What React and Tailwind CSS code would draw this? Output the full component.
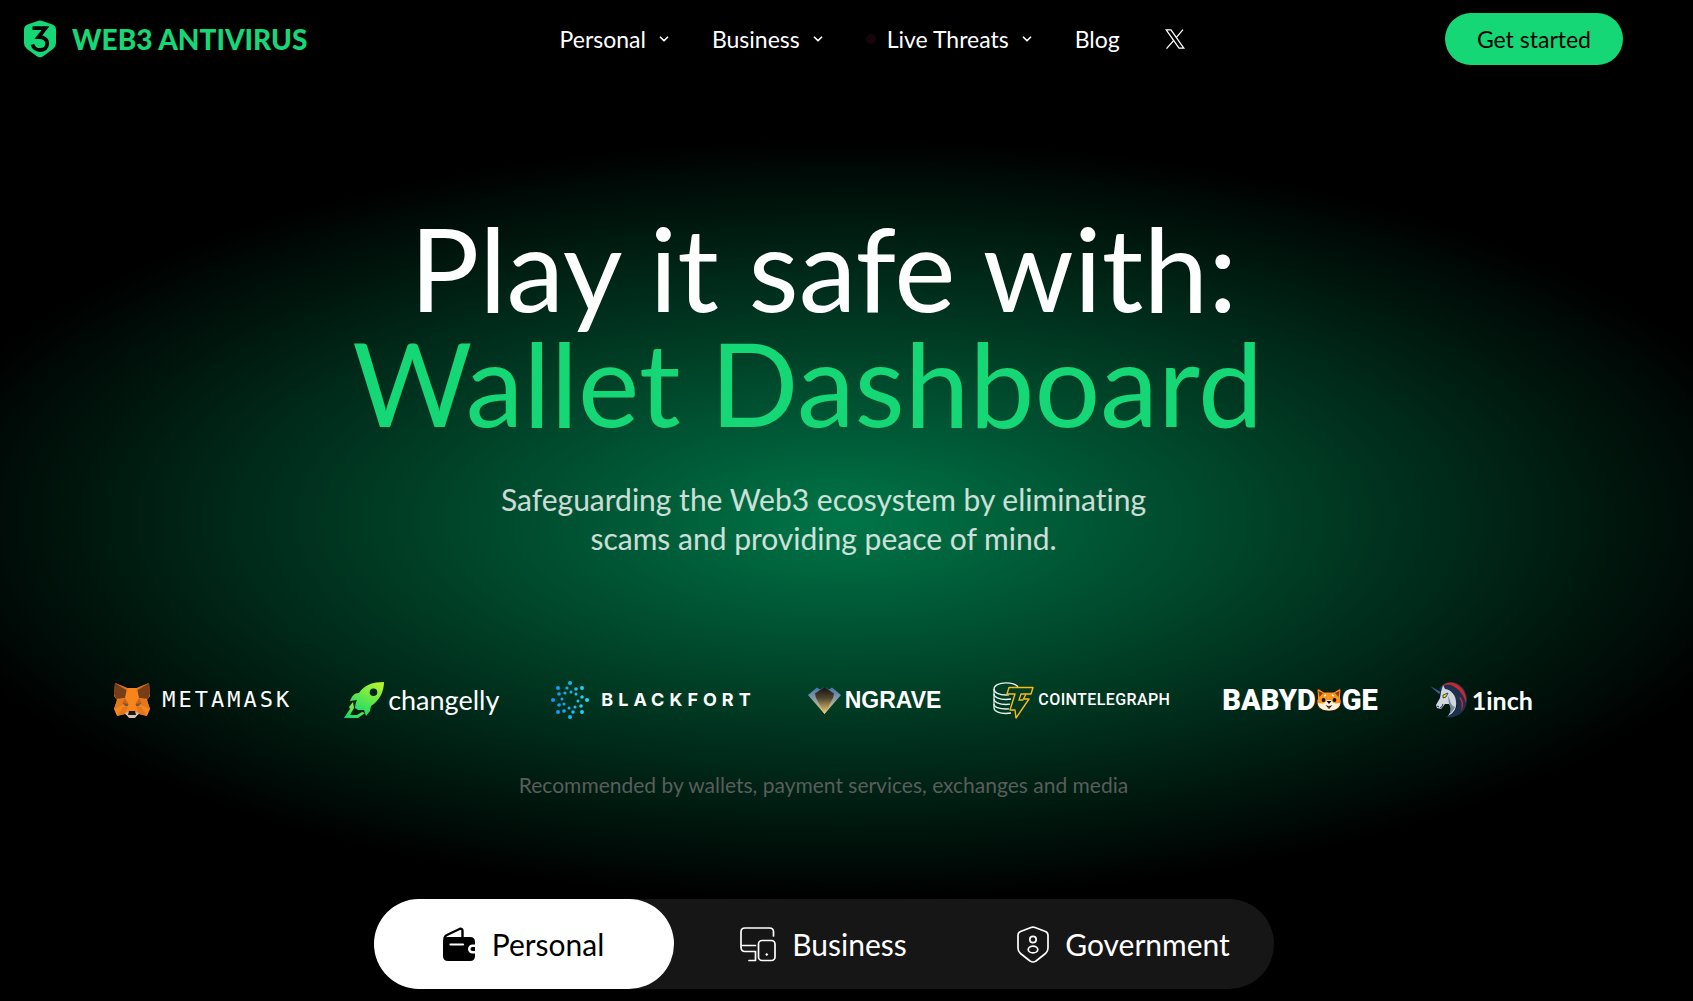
import { useState } from "react";
import { ChevronDown } from "lucide-react";

const ShieldLogo = () => (
  <svg width="32" height="38" viewBox="0 0 32 38" aria-hidden="true">
    <path
      d="M13 1.2Q16 0 19 1.2L28.500 4.500Q32 6 32 9.500V23Q32 26.500 29.500 28.500L19.500 36Q16 38.500 12.500 36L2.500 28.500Q0 26.500 0 23V9.500Q0 6 3.500 4.500Z"
      fill="#16d775"
    />
    <path
      d="M8.500 8.200H21.500L14.500 17C20 16.800 23.200 19.600 23.200 23.600C23.200 28 20 30 16 30C12 30 9.600 28 8.400 24.500"
      fill="none"
      stroke="#000"
      strokeWidth="3.800"
    />
  </svg>
);

const XIcon = () => (
  <svg width="20" height="20" viewBox="0 0 20 20" fill="none" stroke="#fff" strokeWidth="1.300" aria-hidden="true">
    <path d="M1.200 0.800H6L18.800 19.200H14Z" />
    <path d="M18 0.600L11.200 8.600M8.800 11.400L1.500 19.600" />
  </svg>
);

const FoxIcon = () => (
  <svg width="36" height="35" viewBox="0 0 36 35" aria-hidden="true">
    <path d="M1 0L13 5H23L35 0L36 13L33 17L36 26L33 33L25 31L21 34H15L11 31L3 33L0 26L3 17L0 13Z" fill="#f6851b" />
    <path d="M1 0L13 5L11 15L2 16L0 11Z" fill="#763d16" />
    <path d="M35 0L23 5L25 15L34 16L36 11Z" fill="#763d16" />
    <path d="M1 0L14 8L13 5ZM35 0L22 8L23 5Z" fill="#e2761b" />
    <path d="M3 17L11 15L9 22L0 26ZM33 17L25 15L27 22L36 26Z" fill="#e4761b" />
    <path d="M11 15L15 22L8 21ZM25 15L21 22L28 21Z" fill="#cd6116" />
    <path d="M9 20L14 21L14 23L11 23ZM27 20L22 21L22 23L25 23Z" fill="#6b5a4c" />
    <path d="M14 23L11 31L3 33L9 24ZM22 23L25 31L33 33L27 24Z" fill="#e4751f" />
    <path d="M11 30L15 29H21L25 30L21 35H15Z" fill="#d7c1b3" />
    <path d="M15 28H21L22 32H14Z" fill="#161616" />
  </svg>
);

const RocketIcon = () => (
  <svg width="40" height="36" viewBox="0 0 40 36" aria-hidden="true">
    <defs>
      <linearGradient id="rocket" x1="0.800" y1="0" x2="0.300" y2="1">
        <stop offset="0" stopColor="#b4f52a" />
        <stop offset="1" stopColor="#14d96b" />
      </linearGradient>
    </defs>
    <path
      fill="url(#rocket)"
      fillRule="evenodd"
      d="M40 0C29 0 20 3 15 11C10 11 8 14 6 19L13 18C12 20 11 23 11 26L14 28L20 28L22 34L26 29L27 24C35 19 40 10 40 0ZM29.500 6.500A3.800 3.800 0 1 0 29.500 14.100A3.800 3.800 0 1 0 29.500 6.500Z"
    />
    <path fill="url(#rocket)" d="M9 20L5 25L6 27L0 36H14L21 31L18 30L13 33H6L10 26Z" />
  </svg>
);

// [x, y, radius]
const blackfortDots = [
  [19, 2, 2], [19, 36, 2], [2, 19, 2], [36, 19, 2],
  [7, 7, 2], [31, 7, 2], [7, 31, 2], [31, 31, 2],
  [16, 7, 1.6], [25, 8, 1.8], [8, 13, 1.8], [14, 12, 1.6],
  [20, 11, 1.5], [25, 13, 1.5], [31, 16, 1.8], [11, 18, 1.5],
  [27, 20, 1.5], [8, 24, 1.8], [13, 23, 1.5], [30, 25, 1.8],
  [18, 27, 1.5], [24, 26, 1.5], [13, 30, 1.8], [22, 31, 1.8],
];

const BlackfortIcon = () => (
  <svg width="38" height="38" viewBox="0 0 38 38" aria-hidden="true">
    <defs>
      <linearGradient id="dots" gradientUnits="userSpaceOnUse" x1="0" y1="0" x2="38" y2="0">
        <stop offset="0" stopColor="#0a90ff" />
        <stop offset="1" stopColor="#22dcf0" />
      </linearGradient>
    </defs>
    {blackfortDots.map(([x, y, r]) => (
      <circle key={`${x}-${y}`} cx={x} cy={y} r={r} fill="url(#dots)" />
    ))}
  </svg>
);

const NgraveIcon = () => (
  <svg width="33" height="27" viewBox="0 0 33 27" aria-hidden="true">
    <defs>
      <linearGradient id="gemOuter" x1="0" y1="0" x2="0" y2="1">
        <stop offset="0" stopColor="#3e74b4" />
        <stop offset="0.500" stopColor="#93a0a0" />
        <stop offset="1" stopColor="#f0cc70" />
      </linearGradient>
      <linearGradient id="gemInner" x1="0" y1="0" x2="0" y2="1">
        <stop offset="0" stopColor="#14120f" />
        <stop offset="0.400" stopColor="#4d422d" />
        <stop offset="1" stopColor="#f7d47c" />
      </linearGradient>
    </defs>
    <path d="M0 8L9 0.500L12 2.500L16.500 0L21 2.500L24 0.500L33 8L16.500 27Z" fill="url(#gemOuter)" />
    <path d="M16.500 0L26 6.500L25 11L16.500 27L8 11L7 6.500Z" fill="url(#gemInner)" />
  </svg>
);

const CointelegraphIcon = () => (
  <svg width="41" height="37" viewBox="0 0 41 37" fill="none" strokeWidth="1.300" aria-hidden="true">
    <g stroke="#e8f2ec">
      <path d="M25 5C23 2 18 0.800 13 0.800C6 0.800 1 3.500 1 7C1 10.500 6 13 13 13L16 12.800" />
      <path d="M1 7V26C1 29 6 31.500 13 31.500L18 31" />
      <path d="M1 12C1 15 6 17.500 13 17.500L18 17M1 17C1 20 6 22.500 13 22.500L17 22.200M1 22C1 25 6 27 13 27L16 26.800" />
    </g>
    <path
      d="M16 5.500H40L38 12H33L30.500 17H36L23 36L22 28H17L22 12H14Z"
      stroke="#fbb914"
      strokeWidth="1.400"
      strokeLinejoin="round"
    />
    <path d="M33 12H28L26 18H30.500" stroke="#fbb914" />
  </svg>
);

const DogeIcon = () => (
  <svg width="26" height="24" viewBox="0 0 26 24" aria-hidden="true">
    <path
      d="M1 2C1 0.500 3 0.500 4 1.500L8 4H18L22 1.500C23 0.500 25 0.500 25 2L24.500 10C27 17 23 23 13 23S-1 17 1.500 10Z"
      fill="#f7931e"
      stroke="#1c1009"
    />
    <path d="M2.500 3L7 5L3.500 9ZM23.500 3L19 5L22.500 9Z" fill="#8c3d10" />
    <path d="M2 15C5 15 8 17 11 12H15C18 17 21 15 24 15C24 20 19 22.400 13 22.400S2 20 2 15Z" fill="#fff3e0" />
    <circle cx="7.500" cy="12" r="1.900" fill="#160c06" />
    <circle cx="18.500" cy="12" r="1.900" fill="#160c06" />
    <path d="M8 8L10 7M18 8L16 7" stroke="#fff3e0" strokeWidth="1.500" />
    <path d="M10.500 13H15.500L13 16ZM9.500 17Q13 19 16.500 17L13 21Z" fill="#160c06" />
    <path d="M12 18.500H14L13 20.500Z" fill="#e5484d" />
  </svg>
);

const UnicornIcon = () => (
  <svg width="38" height="38" viewBox="0 0 38 38" aria-hidden="true">
    <path d="M9 8C13 1 22 -1 28 3C36 7 39 17 36 25C33 33 25 38 15 36C22 34 26 30 27 24Z" fill="#1b314f" />
    <path d="M12 5C17 0 24 1 28 4C34 8 37 15 36 22C34 15 30 8 21 4C18 3.500 15 4 12 5Z" fill="#c8282c" />
    <path d="M17 4C25 6 31 13 32 20C33 25 31 30 27 33C30 25 28 14 17 8Z" fill="#1b314f" />
    <path d="M30 16C34 20 34 26 31 30C32 25 32 20 29 17Z" fill="#c8282c" />
    <path d="M13 4L15 8C22 9 26 15 26 21C27 27 24 32 18 35C21 31 22 27 19 23L15 23L11 28L7 27L6 24L10 17L11 11Z" fill="#cfd6de" />
    <path d="M18 15C21 20 20 24 25 26C23 30 20 33 18 35C21 31 22 27 19 23Z" fill="#7588a0" />
    <path d="M0 5L11 11L9 13Z" fill="#3d5a85" />
    <path d="M13 14L18 12L16 16L13 17Z" fill="#e6d01a" stroke="#1b314f" strokeWidth="0.800" />
    <path d="M7 25L9 26M13 23Q12 27 10 27" stroke="#1b314f" fill="none" />
  </svg>
);

const WalletIcon = () => (
  <svg width="33" height="35" viewBox="0 0 33 35" aria-hidden="true">
    <path d="M1.500 17V12Q1.500 9 4 8L16.500 2Q19.500 1 19.500 4V12" fill="none" stroke="#000" strokeWidth="2.400" />
    <path
      fill="#000"
      d="M5 10H27Q32 10 32 15V17.500H29.500A4.500 4.500 0 0 0 29.500 26.500H32V29Q32 34 27 34H5Q0 34 0 29V15Q0 10 5 10Z"
    />
    <path d="M32 20H29.500A2 2 0 0 0 29.500 24H32Z" fill="#000" />
    <path d="M7.500 17.500H20" stroke="#fff" strokeWidth="2.200" strokeLinecap="round" />
  </svg>
);

const DevicesIcon = () => (
  <svg
    width="36"
    height="35"
    viewBox="0 0 36 35"
    fill="none"
    stroke="#fff"
    strokeWidth="1.700"
    strokeLinecap="round"
    aria-hidden="true"
  >
    <path d="M33.500 9V5Q33.500 1 29.500 1H5Q1 1 1 5V20Q1 24.500 5 24.500H15.500V33.500M9 33.500H15.500M1 18.500H15.500" />
    <rect x="18.500" y="13.500" width="16.500" height="20" rx="3.500" />
    <circle cx="26.700" cy="27.500" r="0.900" fill="#fff" strokeWidth="0.800" />
  </svg>
);

const OfficialIcon = () => (
  <svg width="32" height="37" viewBox="0 0 32 37" fill="none" stroke="#fff" strokeWidth="1.700" aria-hidden="true">
    <path d="M14 1.500Q16 0.700 18 1.500L28.500 5.500Q31 6.500 31 9.500V22Q31 25.500 28.500 27.500L19 35Q16 37 13 35L3.500 27.500Q1 25.500 1 22V9.500Q1 6.500 3.500 5.500Z" />
    <circle cx="16" cy="13.500" r="3.200" />
    <ellipse cx="16" cy="23.500" rx="4.800" ry="3.400" />
  </svg>
);

const navItems = [
  { label: "Personal", menu: true },
  { label: "Business", menu: true },
  { label: "Live Threats", menu: true, live: true },
  { label: "Blog" },
];

const tabs = [
  { id: "personal", label: "Personal", Icon: WalletIcon },
  { id: "business", label: "Business", Icon: DevicesIcon },
  { id: "government", label: "Government", Icon: OfficialIcon },
];

const Header = () => (
  <header className="flex h-[78px] items-center justify-between px-6">
    <a href="#home" className="flex items-center gap-4 text-[28px] leading-8 font-black text-[#16d775]">
      <ShieldLogo />
      <span>WEB3 ANTIVIRUS</span>
    </a>
    <nav className="flex items-center gap-[41px] pr-2 text-[23px] leading-8">
      {navItems.map((item) =>
        item.menu ? (
          <button key={item.label} type="button" className="flex items-center gap-[11px]">
            {item.live && <span className="size-[10px] rounded-full bg-[#16060a]" />}
            <span>{item.label}</span>
            <ChevronDown size={14} strokeWidth={3} />
          </button>
        ) : (
          <a key={item.label} href="#blog">
            {item.label}
          </a>
        )
      )}
      <a href="#x" aria-label="X" className="pl-1">
        <XIcon />
      </a>
    </nav>
    <a href="#start" className="rounded-full bg-[#16d775] px-8 py-[10px] text-[23px] leading-8 text-black">
      Get started
    </a>
  </header>
);

const Partners = () => (
  <ul className="flex h-10 items-center justify-center gap-[52px] whitespace-nowrap">
    <li className="flex items-center gap-3">
      <FoxIcon />
      <span className="font-['DejaVu_Sans_Mono'] text-[22px] leading-8 tracking-[3px]">METAMASK</span>
    </li>
    <li className="flex items-center gap-1">
      <RocketIcon />
      <span className="text-[27px] leading-8">changelly</span>
    </li>
    <li className="flex items-center gap-3">
      <BlackfortIcon />
      <span className="font-['Inter'] text-[18px] leading-8 font-bold tracking-[5px]">BLACKFORT</span>
    </li>
    <li className="flex items-center gap-1">
      <NgraveIcon />
      <span className="font-['Liberation_Sans'] text-[23px] leading-8 font-bold">NGRAVE</span>
    </li>
    <li className="flex items-center gap-1">
      <CointelegraphIcon />
      <span className="font-['Roboto'] text-base leading-8 font-medium tracking-wide">COINTELEGRAPH</span>
    </li>
    <li className="flex items-center font-['Roboto'] text-[29px] leading-8 font-black">
      <span>BABYD</span>
      <DogeIcon />
      <span>GE</span>
    </li>
    <li className="flex items-center gap-1">
      <UnicornIcon />
      <span className="text-[25px] leading-8 font-bold">1inch</span>
    </li>
  </ul>
);

const App = () => {
  const [activeTab, setActiveTab] = useState("personal");

  return (
    <div className="min-h-screen bg-black bg-[radial-gradient(56%_380px_at_50%_520px,#007547,#000)] pr-[46px] pb-3 font-['Lato',sans-serif] text-white [font-variant-ligatures:none]">
      <Header />
      <main className="pt-[132px] text-center">
        <h1 className="text-[116px] leading-[115px]">
          <span className="block">Play it safe with:</span>
          <span className="block pr-8 text-[#16d775]">Wallet Dashboard</span>
        </h1>
        <p className="mx-auto mt-10 max-w-[700px] text-[30px] leading-[39px] text-white/80">
          Safeguarding the Web3 ecosystem by eliminating scams and providing peace of mind.
        </p>
        <section className="mt-[122px]">
          <Partners />
          <p className="mt-[49px] text-[21px] leading-8 text-[#595d5b]">
            Recommended by wallets, payment services, exchanges and media
          </p>
        </section>
        <div role="tablist" className="mx-auto mt-[98px] grid max-w-[900px] grid-cols-3 rounded-full bg-[#161616]">
          {tabs.map(({ id, label, Icon }) => (
            <button
              key={id}
              type="button"
              role="tab"
              aria-selected={activeTab === id}
              onClick={() => setActiveTab(id)}
              className={`flex h-[90px] items-center justify-center gap-4 rounded-full text-[30px] leading-10 ${
                activeTab === id ? "bg-white text-black" : "text-white"
              }`}
            >
              <Icon />
              <span>{label}</span>
            </button>
          ))}
        </div>
      </main>
    </div>
  );
};

export default App;
